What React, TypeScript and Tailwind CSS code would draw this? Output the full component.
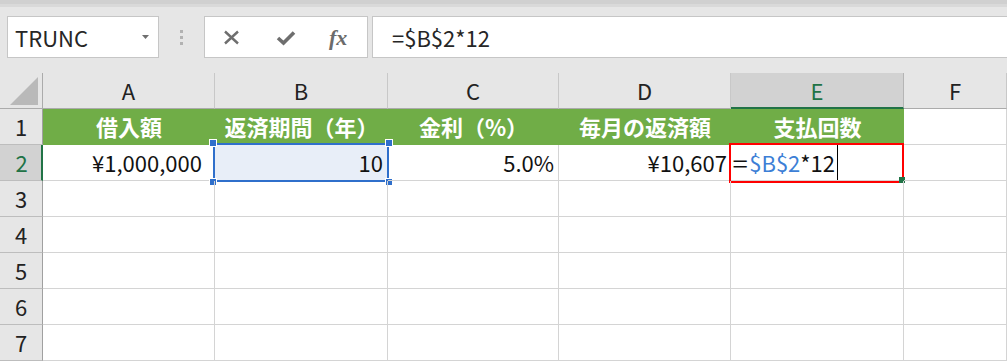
import React from "react";

const GRID = "grid grid-cols-[43px_172px_173px_171px_172px_173px_103px]";
const FONT = "font-['Noto_Sans_CJK_JP',sans-serif]";

const headers = ["借入額", "返済期間（年）", "金利（%）", "毎月の返済額", "支払回数"];

function Toolbar() {
  return (
    <div className="bg-[#e6e6e6]">
      <div className="h-[4px] bg-[#d0d0d0]" />
      <div className="h-[3px] bg-[#d9d9d9]" />
      <div className="flex h-[66px] items-start pt-[9px]">
        <div className="ml-[7px] flex h-[42px] w-[152px] items-center justify-between border border-[#c6c6c6] bg-white pl-[7px] pr-[9px]">
          <span className="text-[22px] leading-none text-[#262626]">TRUNC</span>
          <svg width="7" height="4" viewBox="0 0 7 4">
            <polygon points="0,0 7,0 3.5,4" fill="#6f6f6f" />
          </svg>
        </div>
        <div className="flex h-[42px] w-[45px] flex-col items-center justify-center gap-[3px]">
          <span className="h-[3px] w-[3px] bg-[#b2b2b2]" />
          <span className="h-[3px] w-[3px] bg-[#b2b2b2]" />
          <span className="h-[3px] w-[3px] bg-[#b2b2b2]" />
        </div>
        <div className="flex h-[42px] w-[164px] items-center border border-[#c6c6c6] bg-white pl-[18px]">
          <svg width="17" height="15" viewBox="0 0 17 15" className="mt-[1px]">
            <path d="M2 1.5 L15 13.5 M15 1.5 L2 13.5" stroke="#6e6e6e" strokeWidth="2.4" fill="none" />
          </svg>
          <svg width="20" height="16" viewBox="0 0 20 16" className="ml-[36px] mt-[2px]">
            <path d="M2 8 L7.5 13 L18 2.5" stroke="#6e6e6e" strokeWidth="3.6" fill="none" />
          </svg>
          <span className="ml-[33px] mt-[2px] font-['Liberation_Serif',serif] text-[22px] font-bold italic leading-none text-[#6b6b6b]">
            fx
          </span>
        </div>
        <div className="ml-[4px] flex h-[42px] flex-1 items-center border border-r-0 border-[#c6c6c6] bg-white pl-[19px]">
          <span className="text-[22px] leading-none text-[#262626]">=$B$2*12</span>
        </div>
      </div>
    </div>
  );
}

function ColumnHeader() {
  const letters = ["A", "B", "C", "D", "E", "F"];
  return (
    <div className={`${GRID} h-[36px] bg-[#e6e6e6]`}>
      <div className="flex items-end justify-end border-r border-b border-[#ababab] pb-[3px] pr-[3px]">
        <svg width="29" height="28" viewBox="0 0 29 28">
          <polygon points="28,0 28,28 0,28" fill="#b9b9b9" />
        </svg>
      </div>
      {letters.map((l) =>
        l === "E" ? (
          <div
            key={l}
            className="flex items-center justify-center border-r border-b-2 border-r-[#b5b5b5] border-b-[#217346] bg-[#d2d2d2] text-[22px] text-[#217346]"
          >
            {l}
          </div>
        ) : (
          <div
            key={l}
            className="flex items-center justify-center border-r border-b border-r-[#c8c8c8] border-b-[#ababab] text-[22px] text-[#222]"
          >
            {l}
          </div>
        )
      )}
    </div>
  );
}

function RowHead({ n, active }: { n: number; active?: boolean }) {
  return active ? (
    <div className="flex items-center justify-center border-r-2 border-b border-r-[#217346] border-b-[#bdbdbd] bg-[#d2d2d2] pl-[2px] text-[22px] text-[#217346]">
      {n}
    </div>
  ) : (
    <div className="flex items-center justify-center border-r border-b border-r-[#a0a0a0] border-b-[#bdbdbd] bg-[#e6e6e6] text-[22px] text-[#222]">
      {n}
    </div>
  );
}

function Cell({ children, className = "" }: { children?: React.ReactNode; className?: string }) {
  return (
    <div className={`relative flex items-center border-r border-b border-[#d4d4d4] text-[22px] text-[#111] ${className}`}>
      {children}
    </div>
  );
}

function Handle({ pos }: { pos: string }) {
  return <span className={`absolute h-[6px] w-[6px] bg-[#2f6fcb] outline outline-1 outline-white ${pos}`} />;
}

export default function App() {
  return (
    <div className={`h-[361px] w-[1007px] overflow-hidden bg-white ${FONT}`}>
      <Toolbar />
      <ColumnHeader />

      {/* row 1 */}
      <div className={`${GRID} h-[36px]`}>
        <RowHead n={1} />
        {headers.map((h) => (
          <div
            key={h}
            className="flex items-center justify-center border-b border-[#70ad47] bg-[#70ad47] text-[22px] font-bold text-white"
          >
            {h}
          </div>
        ))}
        <Cell />
      </div>

      {/* row 2 */}
      <div className={`${GRID} h-[36px]`}>
        <RowHead n={2} active />
        <Cell className="justify-end pr-[12px]">¥1,000,000</Cell>
        <Cell className="justify-end bg-[#e8eef8] pr-[4px]">
          10
          <span className="absolute -top-[2px] -right-[2px] -bottom-[2px] -left-[2px] border-2 border-[#2f6fcb]" />
          <Handle pos="-top-[5px] -left-[5px]" />
          <Handle pos="-top-[5px] -right-[5px]" />
          <Handle pos="-bottom-[5px] -left-[5px]" />
          <Handle pos="-bottom-[5px] -right-[5px]" />
        </Cell>
        <Cell className="justify-end pr-[4px]">5.0%</Cell>
        <Cell className="justify-end pr-[3px]">¥10,607</Cell>
        <Cell className="pl-[3px]">
          <span className="mr-[3px] scale-x-125">=</span>
          <span className="text-[#3d7fd6]">$B$2</span>
          <span>*12</span>
          <span className="ml-[2px] h-[35px] w-px bg-black" />
          <span className="absolute -top-[2px] -right-[1px] -bottom-[3px] -left-[2px] border-2 border-[#ff0000]" />
          <span className="absolute -right-[2px] -bottom-[3px] h-[6px] w-[6px] bg-[#217346]" />
        </Cell>
        <Cell />
      </div>

      {[3, 4, 5, 6, 7].map((n) => (
        <div key={n} className={`${GRID} h-[36px]`}>
          <RowHead n={n} />
          <Cell />
          <Cell />
          <Cell />
          <Cell />
          <Cell />
          <Cell />
        </div>
      ))}
    </div>
  );
}
